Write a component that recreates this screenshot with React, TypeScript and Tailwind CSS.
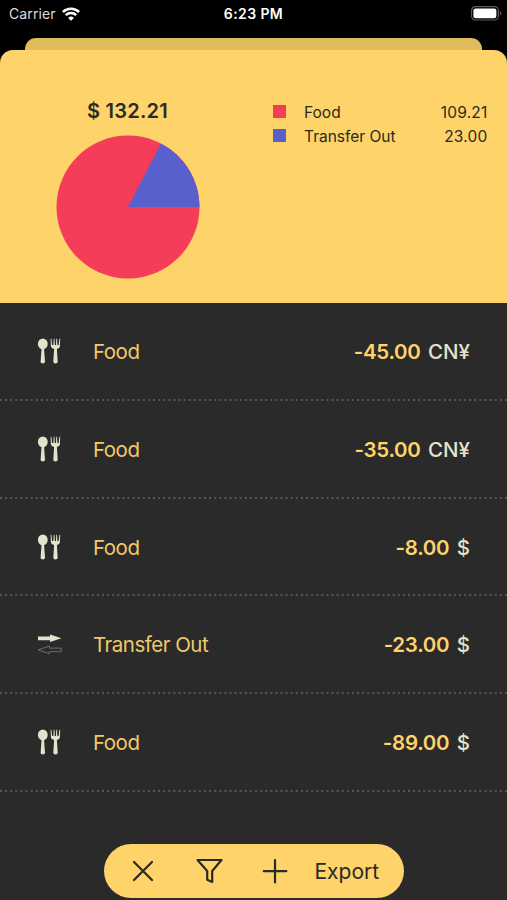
import { clsx } from 'clsx';

type Category = 'food' | 'transfer';

interface Transaction {
  id: number;
  category: Category;
  label: string;
  amount: string;
  currency: string;
}

const transactions: Transaction[] = [
  { id: 1, category: 'food', label: 'Food', amount: '-45.00', currency: 'CN¥' },
  { id: 2, category: 'food', label: 'Food', amount: '-35.00', currency: 'CN¥' },
  { id: 3, category: 'food', label: 'Food', amount: '-8.00', currency: '$' },
  { id: 4, category: 'transfer', label: 'Transfer Out', amount: '-23.00', currency: '$' },
  { id: 5, category: 'food', label: 'Food', amount: '-89.00', currency: '$' },
];

const legend = [
  { label: 'Food', value: '109.21', swatch: 'bg-[#f53d59]' },
  { label: 'Transfer Out', value: '23.00', swatch: 'bg-[#5960cd]' },
];

function WifiIcon() {
  return (
    <svg width="18" height="14" viewBox="0 0 18 14" fill="none" stroke="#fff" strokeWidth="2.5">
      <path d="M0.9 5a11.5 11.5 0 0 1 16.2 0" />
      <path d="M3.8 8.2a7.4 7.4 0 0 1 10.4 0" />
      <path d="M9 13.8 6.1 10.9a4.1 4.1 0 0 1 5.8 0z" fill="#fff" stroke="none" />
    </svg>
  );
}

function BatteryIcon() {
  return (
    <svg width="31" height="15" viewBox="0 0 31 15" fill="none">
      <rect x="0.6" y="0.6" width="26.8" height="13.4" rx="4" stroke="#5c5c5e" strokeWidth="1.2" />
      <rect x="2.4" y="2.4" width="23" height="9.8" rx="2.2" fill="#fff" />
      <path d="M28.8 5v4.6c1-.4 1.5-1.3 1.5-2.3s-.5-1.9-1.5-2.3z" fill="#5c5c5e" />
    </svg>
  );
}

function StatusBar() {
  return (
    <div className="grid h-[38px] grid-cols-3 items-start px-[9px] text-[14px] leading-[28px] text-white">
      <div className="flex items-center gap-[6px] text-[#dcdcdc]">
        <span className="tracking-[0.1px]">Carrier</span>
        <WifiIcon />
      </div>
      <div className="text-center font-semibold tracking-[0.4px]">6:23 PM</div>
      <div className="-mr-[4px] flex h-[27px] items-center justify-end">
        <BatteryIcon />
      </div>
    </div>
  );
}

function PieChart() {
  return (
    <svg width="144" height="144" viewBox="-72 -72 144 144">
      <circle r="71.5" fill="#f53d59" />
      <path d="M0 0H71.5A71.5 71.5 0 0 0 32.8 -63.5Z" fill="#5960cd" />
    </svg>
  );
}

function Summary() {
  return (
    <div className="flex h-[253px] shrink-0 rounded-t-[13px] bg-[#fdd36a] text-[#2b2a22]">
      <div className="flex w-[255px] flex-col items-center pt-[48px]">
        <div className="text-[20px] leading-[26px] font-semibold tracking-[0.25px]">$ 132.21</div>
        <div className="mt-[11px]">
          <PieChart />
        </div>
      </div>
      <ul className="flex-1 pt-[49px] pr-[19.5px] pl-[18px] text-[15.5px]">
        {legend.map((item) => (
          <li key={item.label} className="flex h-[24.5px] items-center">
            <span className={clsx('size-[13px] shrink-0', item.swatch)} />
            <span className="mt-[2px] ml-[18px] flex-1">{item.label}</span>
            <span className="mt-[2px] tracking-[0.2px]">{item.value}</span>
          </li>
        ))}
      </ul>
    </div>
  );
}

function CutleryIcon() {
  return (
    <svg width="24" height="26" viewBox="0 0 24 26" fill="#e4e2cb">
      <ellipse cx="5.8" cy="5.9" rx="4.9" ry="5.4" />
      <path d="M4.6 10h2.4l1 13.8a2.200 1.600 0 0 1-4.400 0z" />
      <path d="M13.6.7h.8l.7 6.3h1.3l.3-6.3h.8l.3 6.3h1.2l.3-6.3h.8l.3 6.3h1.3l.7-6.3h.8l-.3 7.4c-.1 1.8-1.3 2.7-3 2.9l.8 12.8a2.200 1.600 0 0 1-4.400 0l.8-12.8c-1.700-.2-3.100-1.100-3.200-2.900z" />
    </svg>
  );
}

function TransferIcon() {
  return (
    <svg width="26" height="22" viewBox="0 0 26 22">
      <path d="M1 2.400h12V.6L24.500 4.300 13 8V6.200H1z" fill="#e4e2cb" />
      <path d="M24.300 14.100H12.300v-2L1.200 15.900l11.100 3.800v-2h12z" fill="none" stroke="#77766c" strokeWidth="0.9" />
    </svg>
  );
}

function TransactionRow({ transaction }: { transaction: Transaction }) {
  return (
    <li className="flex h-[97.75px] flex-col">
      <div className="flex flex-1 items-center px-[37px] pt-[3px] text-[20.5px]">
        <div className="-mt-[2px] flex w-[56px]">
          {transaction.category === 'food' ? <CutleryIcon /> : <TransferIcon />}
        </div>
        <span className="flex-1 tracking-[-0.5px] text-[#f0c968]">{transaction.label}</span>
        <span className="font-semibold tracking-[-0.3px] text-[#fdd36a]">{transaction.amount}</span>
        <span className="ml-[7.5px] font-medium text-[#e4e2cb]">{transaction.currency}</span>
      </div>
      <svg className="h-[2px] w-full" aria-hidden="true">
        <line x1="0" y1="1" x2="507" y2="1" stroke="#666666" strokeWidth="1.5" strokeDasharray="2 3.1" />
      </svg>
    </li>
  );
}

function Toolbar() {
  return (
    <div className="mx-auto mt-[52px] flex h-[54px] w-[300px] shrink-0 items-center rounded-full bg-[#fdd36a] text-[#2b2a22]">
      <button type="button" aria-label="Close" className="ml-[28.5px]">
        <svg width="22" height="22" viewBox="0 0 22 22" fill="none" stroke="currentColor" strokeWidth="2.2" strokeLinecap="round">
          <path d="M2 2l18 18M20 2L2 20" />
        </svg>
      </button>
      <button type="button" aria-label="Filter" className="ml-[40.5px]">
        <svg width="28" height="28" viewBox="0 0 28 28" fill="none" stroke="currentColor" strokeWidth="2.2" strokeLinejoin="round">
          <path d="M2.500 3h24L17.200 14V25L12.200 22.800V14z" />
        </svg>
      </button>
      <button type="button" aria-label="Add" className="ml-[39.5px]">
        <svg width="26" height="26" viewBox="0 0 26 26" fill="none" stroke="currentColor" strokeWidth="2.2" strokeLinecap="round">
          <path d="M13 2v22.500M1.800 13.200h22.500" />
        </svg>
      </button>
      <button type="button" className="mt-px ml-[26.5px] text-[21px]">
        Export
      </button>
    </div>
  );
}

export default function App() {
  return (
    <div className="flex h-[900px] w-[507px] flex-col overflow-hidden bg-black font-['Inter',sans-serif]">
      <StatusBar />
      <div className="mx-[25px] h-[12px] shrink-0 rounded-t-[11px] bg-[#debb5b]" />
      <Summary />
      <div className="flex flex-1 flex-col bg-[#2a2a2a]">
        <ul>
          {transactions.map((transaction) => (
            <TransactionRow key={transaction.id} transaction={transaction} />
          ))}
        </ul>
        <Toolbar />
      </div>
    </div>
  );
}
